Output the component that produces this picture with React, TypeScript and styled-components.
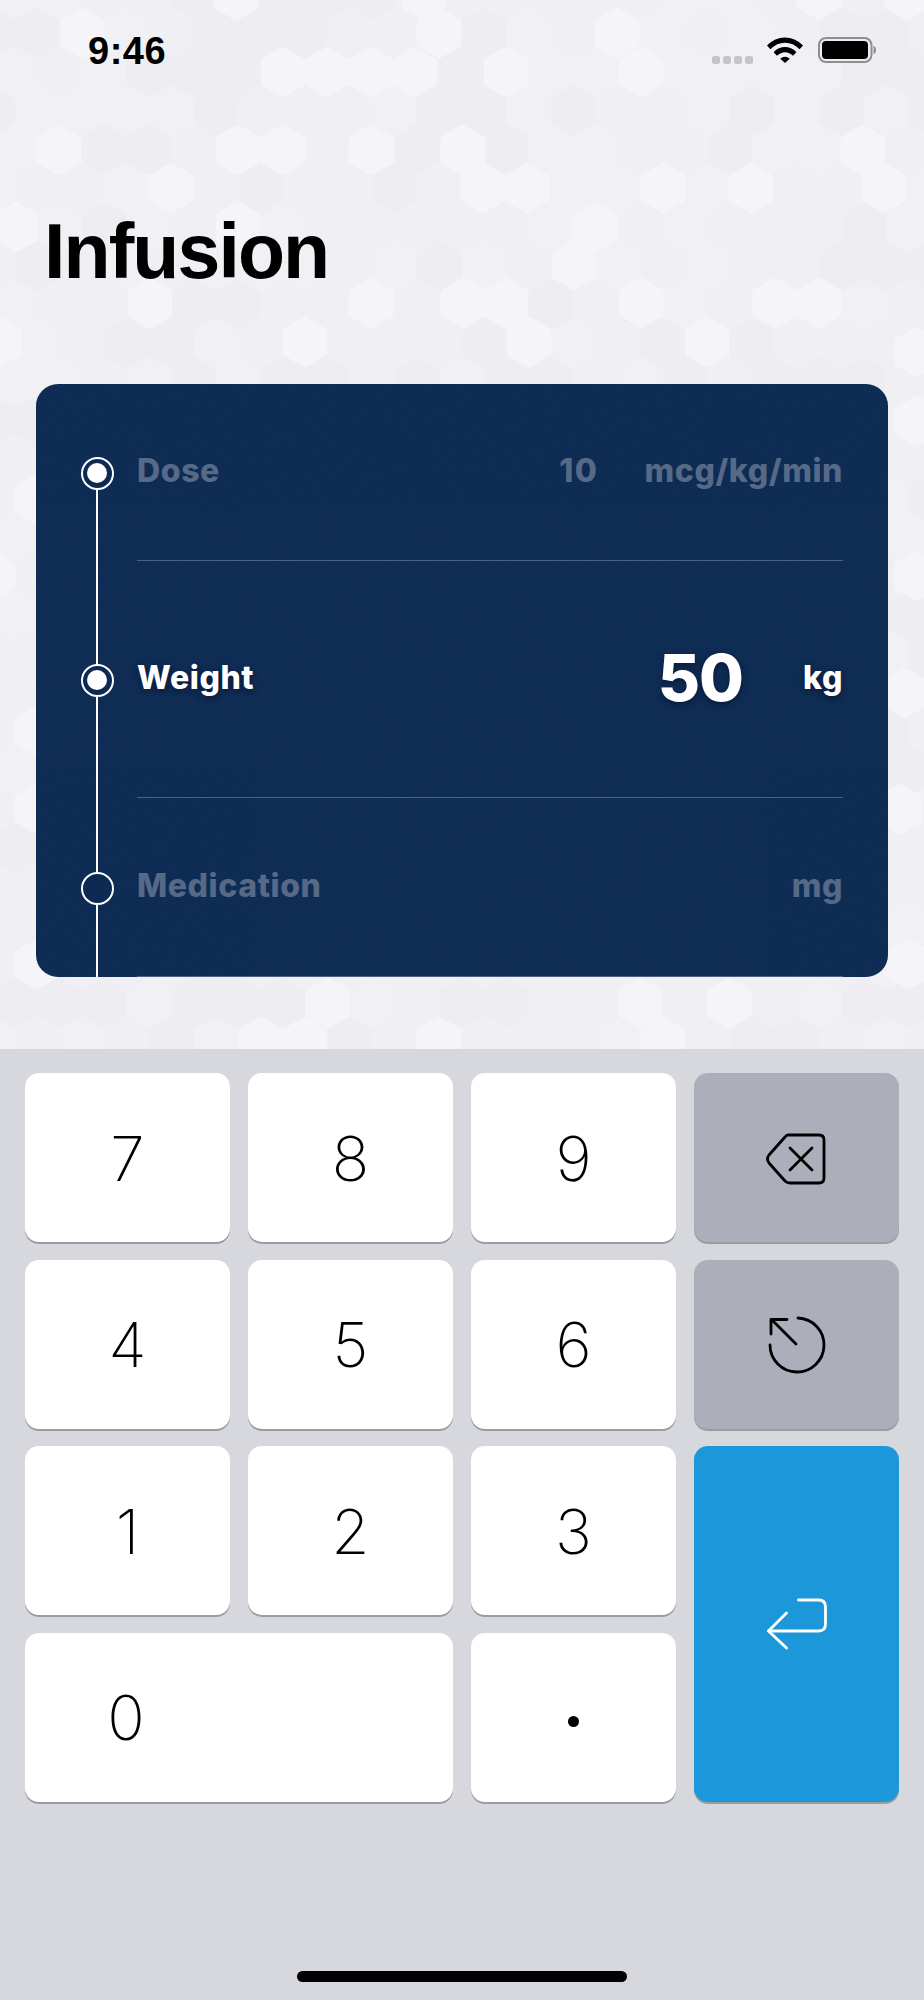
import React from "react";
import styled, { createGlobalStyle } from "styled-components";

const Global = createGlobalStyle`
  html, body { margin: 0; padding: 0; background: #f1f1f5; }
  #root { width: 924px; height: 2000px; overflow: hidden; }
`;

const Page = styled.div`
  position: relative;
  width: 924px;
  height: 2000px;
  display: flex;
  flex-direction: column;
  background: #f1f1f5;
  overflow: hidden;
`;

const HexBackdrop = styled.svg`
  position: absolute;
  left: 0;
  top: 0;
`;

const StatusBar = styled.div`
  position: relative;
  height: 37px;
  margin-top: 37px;
  padding: 0 48px 0 88px;
  display: flex;
  justify-content: space-between;
  align-items: flex-start;
`;

const Time = styled.span`
  font: 700 38px/28px "Liberation Sans", Arial, sans-serif;
  letter-spacing: 0.5px;
  color: #000;
`;

const Indicators = styled.div`
  display: flex;
  align-items: flex-start;
`;

const SignalDots = styled.div`
  display: flex;
  gap: 3px;
  margin: 19px 14px 0 0;
`;

const SignalDot = styled.i`
  display: block;
  width: 8px;
  height: 8px;
  border-radius: 2.5px;
  background: #c4c4c9;
`;

const WifiGlyph = styled.svg`
  display: block;
  margin-right: 15px;
`;

const BatteryGlyph = styled.svg`
  display: block;
`;

const Title = styled.h1`
  position: relative;
  margin: 141px 0 0 44px;
  height: 73px;
  font: 700 77px/73px "Liberation Sans", Arial, sans-serif;
  color: #000;
  letter-spacing: -1.9px;
`;

const Card = styled.section`
  position: relative;
  margin: 96px 36px 0;
  height: 593px;
  padding: 0 45px 0 101px;
  border-radius: 22px;
  background: #0d2a52;
  overflow: hidden;
  box-sizing: border-box;
`;

const Grain = styled.svg`
  position: absolute;
  inset: 0;
  opacity: 0.1;
  pointer-events: none;
`;

const Row = styled.div<{ $height: number; $pad: number }>`
  position: relative;
  box-sizing: border-box;
  height: ${(p) => p.$height}px;
  padding-top: ${(p) => p.$pad}px;
  border-bottom: 1.5px solid #4a6283;
`;

const Rail = styled.span<{ $top: number }>`
  position: absolute;
  left: -41px;
  top: ${(p) => p.$top}px;
  bottom: -2px;
  width: 2px;
  background: #fff;
`;

const Node = styled.span<{ $top: number }>`
  position: absolute;
  left: -56.5px;
  top: ${(p) => p.$top}px;
  width: 33px;
  height: 33px;
  box-sizing: border-box;
  border: 2px solid #fff;
  border-radius: 50%;
  background: #0d2a52;
  display: flex;
  align-items: center;
  justify-content: center;
`;

const NodeDot = styled.span`
  width: 20px;
  height: 20px;
  border-radius: 50%;
  background: #fff;
`;

const RowLine = styled.div<{ $active?: boolean }>`
  position: relative;
  height: 40px;
  display: flex;
  align-items: center;
  font: 800 32px/40px Inter, "Liberation Sans", sans-serif;
  letter-spacing: 0.6px;
  color: ${(p) => (p.$active ? "#fff" : "#566a88")};
  text-shadow: ${(p) => (p.$active ? "0 2px 6px rgba(0,8,30,.55)" : "none")};
  transform: translateY(-2px);
`;

const Label = styled.span`
  flex: 1;
`;

const Amount = styled.span<{ $big?: boolean; $gap: number }>`
  margin-right: ${(p) => p.$gap}px;
  font-size: ${(p) => (p.$big ? 65 : 32)}px;
  letter-spacing: ${(p) => (p.$big ? -1 : 1.5)}px;
`;

const Unit = styled.span``;

const Keyboard = styled.div`
  position: absolute;
  left: 0;
  right: 0;
  top: 1049px;
  bottom: 0;
  background: #d7d8dd;
  padding: 24px 25px 0;
`;

const Keypad = styled.div`
  display: grid;
  grid-template-columns: repeat(4, 205px);
  grid-auto-rows: 169px;
  gap: 17.5px 18px;
`;

const Key = styled.div<{ $tone?: "digit" | "action" | "enter"; $wide?: boolean; $tall?: boolean }>`
  display: flex;
  align-items: center;
  justify-content: center;
  box-sizing: border-box;
  padding-top: 2px;
  border-radius: 14px;
  font: 250 62px/1 Inter, "Liberation Sans", sans-serif;
  color: #000;
  background: ${(p) =>
    p.$tone === "action" ? "#acaeb9" : p.$tone === "enter" ? "#1c98da" : "#fff"};
  box-shadow: 0 2px 0 #9b9ca2;
  ${(p) => (p.$wide ? "grid-column: span 2; padding-right: 226px;" : "")}
  ${(p) => (p.$tall ? "grid-row: span 2; padding-top: 0;" : "")}
`;

const Dot = styled.span`
  display: block;
  width: 11px;
  height: 11px;
  margin-top: 6px;
  border-radius: 50%;
  background: #000;
`;

const BackspaceSvg = styled.svg`
  display: block;
  margin-left: -2px;
`;

const HomeIndicator = styled.div`
  position: absolute;
  left: 297px;
  top: 922px;
  width: 330px;
  height: 11px;
  border-radius: 5.5px;
  background: #000;
`;

const HEX_R = 25.6;
const hexPoints = (cx: number, cy: number) =>
  [
    [0, -HEX_R],
    [22.35, -HEX_R / 2],
    [22.35, HEX_R / 2],
    [0, HEX_R],
    [-22.35, HEX_R / 2],
    [-22.35, -HEX_R / 2],
  ]
    .map(([x, y]) => `${cx + x},${cy + y}`)
    .join(" ");

const LIGHT: [number, number][] = [
  [82, 33], [439, 33], [617, 33],
  [283, 72], [327, 72], [371, 72], [415, 72], [506, 72], [641, 72],
  [59, 150], [238, 150], [283, 150], [371, 150], [463, 150], [863, 150],
  [171, 188], [483, 188], [527, 188], [663, 188], [751, 188], [884, 188],
  [16, 227], [238, 227], [595, 227],
  [574, 265],
  [150, 303], [371, 303], [463, 303], [506, 303], [641, 303], [775, 303], [819, 303],
  [0, 342], [305, 342], [529, 342], [707, 342],
  [819, -5], [907, -5], [424, -5], [236, -5],
  [-7, 344], [917, 352], [917, 421], [37, 499], [-7, 576], [917, 576], [37, 731],
  [905, 693], [37, 809], [900, 809], [37, 964], [909, 964],
  [328, 1003], [640, 1003], [729, 1003],
  [261, 1042], [305, 1042], [439, 1042], [663, 1042],
];

const buildCells = () => {
  const cells: { x: number; y: number; tone: string }[] = [];
  for (let k = -1; k < 28; k++) {
    const y = 33 + 38.8 * k;
    const start = k % 2 === 0 ? 305.35 - 44.7 * 7 : 283 - 44.7 * 7;
    for (let n = 0; n < 23; n++) {
      const v = Math.abs(Math.sin(k * 12.9898 + n * 78.233) * 43758.5453) % 1;
      const tone = v < 0.25 ? "#eeeef2" : v < 0.55 ? "#f1f1f5" : "#f0f0f4";
      cells.push({ x: start + n * 44.7, y, tone });
    }
  }
  return cells;
};

const Backdrop = () => (
  <HexBackdrop width="924" height="1049" viewBox="0 0 924 1049">
    <rect width="924" height="1049" fill="#f0f0f4" />
    {buildCells().map((c, i) => (
      <polygon key={i} points={hexPoints(c.x, c.y)} fill={c.tone} />
    ))}
    {LIGHT.map(([x, y], i) => (
      <polygon key={i} points={hexPoints(x, y)} fill="#f4f4f9" />
    ))}
  </HexBackdrop>
);

const CardGrain = () => (
  <Grain width="852" height="593">
    <filter id="grain">
      <feTurbulence type="fractalNoise" baseFrequency="0.9" numOctaves="2" seed="4" />
      <feColorMatrix values="0 0 0 0 0.4  0 0 0 0 0.5  0 0 0 0 0.7  0 0 0 .55 -.1" />
    </filter>
    <rect width="852" height="593" filter="url(#grain)" />
  </Grain>
);

const Wifi = () => (
  <WifiGlyph width="36" height="26" viewBox="0 0 36 26">
    <path d="M0 8.6 C10-2.2 26-2.2 36 8.6 L32.6 12.2 C24.4 3.6 11.6 3.6 3.4 12.2 Z" fill="#000" />
    <path d="M6.6 15.2 C13.2 8.4 22.8 8.4 29.4 15.2 L26 18.8 C21.2 14 14.8 14 10 18.8 Z" fill="#000" />
    <path d="M13.2 21.8 C16 19 20 19 22.8 21.8 L18 26 Z" fill="#000" />
  </WifiGlyph>
);

const Battery = () => (
  <BatteryGlyph width="58" height="26" viewBox="0 0 58 26">
    <rect x="1" y="1" width="52.5" height="24" rx="7" fill="none" stroke="#8e8e93" strokeWidth="2" />
    <rect x="4" y="4" width="46" height="18" rx="4" fill="#000" />
    <path d="M55.5 9 C57.5 9.6 58 11 58 13 C58 15 57.5 16.4 55.5 17 Z" fill="#8e8e93" />
  </BatteryGlyph>
);

const BackspaceIcon = () => (
  <BackspaceSvg width="60" height="52" viewBox="0 0 60 52" fill="none" stroke="#000" strokeWidth="2.8" strokeLinecap="round" strokeLinejoin="round">
    <path d="M22 2 H53 Q58 2 58 7 V45 Q58 50 53 50 H24 Q21 50 19 48 L3 30 Q0 26 3 22 L19 4 Q20.5 2 22 2 Z" />
    <path d="M24 15 L46 37 M46 15 L24 37" />
  </BackspaceSvg>
);

const ClearIcon = () => (
  <svg width="60" height="60" viewBox="-30 -30 60 60" fill="none" stroke="#000" strokeWidth="2.8" strokeLinecap="round" strokeLinejoin="round">
    <path d="M1 -27 A27 27 0 1 1 -27 0" />
    <path d="M-1 -1 L-24 -24" />
    <path d="M-26 -11 V-25.5 H-10" />
  </svg>
);

const ReturnIcon = () => (
  <svg width="60" height="52" viewBox="-1.5 -2 60 52" fill="none" stroke="#fff" strokeWidth="2.8" strokeLinecap="round" strokeLinejoin="round">
    <path d="M30 0 H50 Q57 0 57 7 V24 Q57 31 50 31 H0" />
    <path d="M18 13 L0 31 L18 48" />
  </svg>
);

const RailRow = ({
  height,
  pad,
  railTop,
  filled,
  active,
  label,
  amount,
  unit,
  gap,
}: {
  height: number;
  pad: number;
  railTop: number;
  filled?: boolean;
  active?: boolean;
  label: string;
  amount?: string;
  unit: string;
  gap?: number;
}) => (
  <Row $height={height} $pad={pad}>
    <Rail $top={railTop} />
    <Node $top={pad + 3.5}>{filled && <NodeDot />}</Node>
    <RowLine $active={active}>
      <Label>{label}</Label>
      {amount && (
        <Amount $big={active} $gap={gap ?? 0}>
          {amount}
        </Amount>
      )}
      <Unit>{unit}</Unit>
    </RowLine>
  </Row>
);

export default function App() {
  return (
    <Page>
      <Global />
      <Backdrop />
      <StatusBar>
        <Time>9:46</Time>
        <Indicators>
          <SignalDots>
            <SignalDot />
            <SignalDot />
            <SignalDot />
            <SignalDot />
          </SignalDots>
          <Wifi />
          <Battery />
        </Indicators>
      </StatusBar>
      <Title>Infusion</Title>
      <Card>
        <CardGrain />
        <RailRow height={177} pad={69} railTop={89} filled label="Dose" amount="10" unit="mcg/kg/min" gap={46} />
        <RailRow height={237} pad={99} railTop={0} filled active label="Weight" amount="50" unit="kg" gap={60} />
        <RailRow height={178.5} pad={70} railTop={1} label="Medication" unit="mg" />
      </Card>
      <Keyboard>
        <Keypad>
          <Key>7</Key>
          <Key>8</Key>
          <Key>9</Key>
          <Key $tone="action"><BackspaceIcon /></Key>
          <Key>4</Key>
          <Key>5</Key>
          <Key>6</Key>
          <Key $tone="action"><ClearIcon /></Key>
          <Key>1</Key>
          <Key>2</Key>
          <Key>3</Key>
          <Key $tone="enter" $tall><ReturnIcon /></Key>
          <Key $wide>0</Key>
          <Key><Dot /></Key>
        </Keypad>
        <HomeIndicator />
      </Keyboard>
    </Page>
  );
}
